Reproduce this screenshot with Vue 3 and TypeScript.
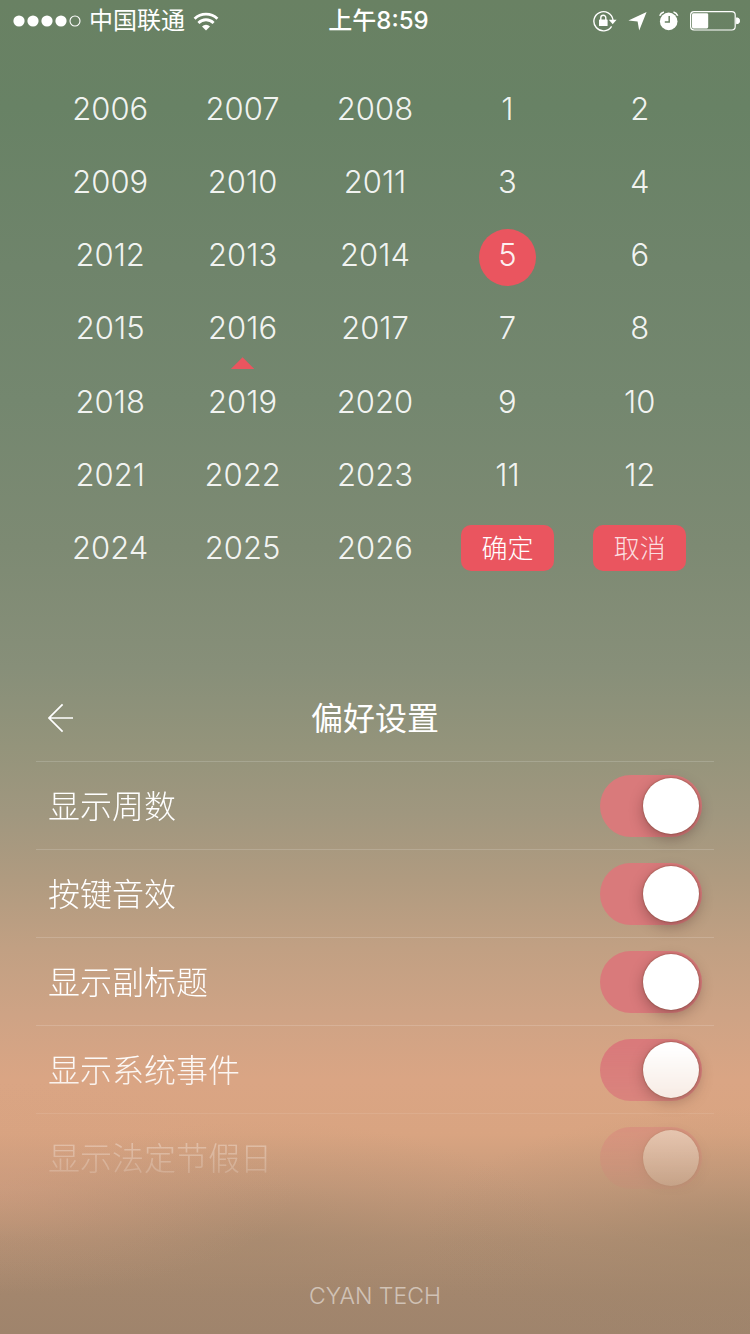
<script setup lang="ts">
import { ref } from 'vue'

interface YearRow {
  years: number[]
  months: number[]
}

interface Setting {
  id: string
  label: string
  on: boolean
}

const currentYear = ref(2016)
const currentMonth = ref(5)

const rows: YearRow[] = Array.from({ length: 7 }, (_, i) => ({
  years: [0, 1, 2].map((n) => 2006 + i * 3 + n),
  months: i < 6 ? [i * 2 + 1, i * 2 + 2] : [],
}))

const settings = ref<Setting[]>([
  { id: 'week', label: '显示周数', on: true },
  { id: 'sound', label: '按键音效', on: true },
  { id: 'subtitle', label: '显示副标题', on: true },
  { id: 'events', label: '显示系统事件', on: true },
  { id: 'holidays', label: '显示法定节假日', on: true },
])
</script>

<template>
  <div class="screen">
    <header class="status">
      <div class="status-left">
        <svg class="signal" width="68" height="12" viewBox="0 0 68 12" aria-hidden="true">
          <circle v-for="n in 4" :key="n" :cx="n * 14 - 8" cy="6" r="5.6" fill="#fff" />
          <circle cx="62" cy="6" r="5" fill="none" stroke="#fff" stroke-width="1.1" />
        </svg>
        <span>中国联通</span>
        <svg class="wifi" width="26" height="19" viewBox="0 0 26 19" aria-hidden="true">
          <g fill="none" stroke="#fff" stroke-width="2.8">
            <path d="M1.6 6.8A16.4 16.4 0 0 1 24.4 6.8" />
            <path d="M5.4 10.9A10.8 10.8 0 0 1 20.6 10.9" />
          </g>
          <path d="M13 18.6L9 14.4A5.8 5.8 0 0 1 17 14.4Z" fill="#fff" />
        </svg>
      </div>
      <time class="clock">上午8:59</time>
      <div class="status-right">
        <svg width="24" height="22" viewBox="0 0 24 22" aria-hidden="true">
          <path d="M18.6 16.4A9.6 9.6 0 1 1 20 10" fill="none" stroke="#fff" stroke-width="1.4" />
          <path d="M15.8 9.8H23.6L19.7 14.2Z" fill="#fff" />
          <rect x="6" y="9.4" width="8.6" height="6.6" rx=".6" fill="#fff" />
          <path d="M7.8 10V7.8a2.5 2.5 0 0 1 5 0V10" fill="none" stroke="#fff" stroke-width="1.4" />
        </svg>
        <svg width="20" height="20" viewBox="0 0 20 20" aria-hidden="true">
          <path d="M18.6 1L.4 9.4L9.6 10.4L11.2 19.4Z" fill="#fff" />
        </svg>
        <svg width="20" height="20" viewBox="0 0 20 20" aria-hidden="true">
          <circle cx="9.7" cy="10.4" r="8.8" fill="#fff" />
          <path d="M.7 4.8A6 6 0 0 1 4.9 1M18.7 4.8A6 6 0 0 0 14.5 1" fill="none" stroke="#fff" stroke-width="1.5" />
          <path d="M10.2 5V11H5.8" fill="none" stroke="#6a8264" stroke-width="1.5" />
        </svg>
        <svg width="50" height="20" viewBox="0 0 50 20" aria-hidden="true">
          <rect x=".6" y=".6" width="44.6" height="18.4" rx="3.4" fill="none" stroke="#fff" stroke-width="1.2" />
          <rect x="2" y="2.2" width="16.2" height="15.2" rx="1.4" fill="#fff" />
          <path d="M46.6 6.8a3 3 0 0 1 0 6Z" fill="#fff" stroke="#fff" />
        </svg>
      </div>
    </header>

    <section class="picker" aria-label="年月">
      <template v-for="(row, i) in rows" :key="i">
        <button
          v-for="y in row.years"
          :key="y"
          type="button"
          class="cell"
          :class="{ year: y === currentYear }"
          :aria-pressed="y === currentYear"
          @click="currentYear = y"
        >{{ y }}</button>
        <button
          v-for="m in row.months"
          :key="m"
          type="button"
          class="cell"
          :class="{ month: m === currentMonth }"
          :aria-pressed="m === currentMonth"
          @click="currentMonth = m"
        >{{ m }}</button>
      </template>
      <button type="button" class="action">确定</button>
      <button type="button" class="action cancel">取消</button>
    </section>

    <main class="panel">
      <div class="title-row">
        <button type="button" class="back" aria-label="返回">
          <svg width="28" height="30" viewBox="0 0 28 30" aria-hidden="true">
            <path d="M14.6 1.4L1 15L14.6 28.6M1 15H25" fill="none" stroke="#fff" stroke-width="1.7" />
          </svg>
        </button>
        <h1>偏好设置</h1>
      </div>
      <ul class="list">
        <li v-for="s in settings" :key="s.id">
          <label :for="s.id">{{ s.label }}</label>
          <input :id="s.id" v-model="s.on" type="checkbox" role="switch" class="toggle" />
        </li>
      </ul>
    </main>

    <footer>CYAN TECH</footer>
  </div>
</template>

<style>
body {
  margin: 0;
}
</style>

<style scoped>
.screen {
  min-height: 100vh;
  box-sizing: border-box;
  display: flex;
  flex-direction: column;
  overflow: hidden;
  color: #fff;
  font-family: Inter, "Noto Sans CJK SC", sans-serif;
  font-weight: 300;
  background:
    radial-gradient(ellipse 40% 8% at 0% 89%, rgba(212, 158, 130, 0.4), rgba(212, 158, 130, 0.15) 50%, transparent),
    radial-gradient(ellipse 44% 10% at 100% 93%, rgba(158, 134, 106, 0.5), rgba(158, 134, 106, 0.2) 50%, transparent),
    radial-gradient(ellipse 40% 9% at 35% 93%, rgba(160, 134, 108, 0.4), rgba(160, 134, 108, 0.15) 50%, transparent),
    linear-gradient(
      180deg,
      #698163 0%,
      #688265 8%,
      #6f846b 20%,
      #74876f 30%,
      #7d8a73 41%,
      #878f79 50%,
      #94947b 56%,
      #a0977f 61%,
      #b09b80 66%,
      #c1a083 71%,
      #cea385 76%,
      #daa584 81%,
      #d9a481 85%,
      #c69a7b 89%,
      #b08e72 93%,
      #a3866d 97%,
      #9f846c 100%
    );
}

button {
  padding: 0;
  border: 0;
  background: none;
  color: inherit;
  font: inherit;
  cursor: pointer;
}

.status {
  height: 42px;
  padding: 0 10px 0 13px;
  display: grid;
  grid-template-columns: 1fr auto 1fr;
  align-items: center;
  font-size: 24px;
  line-height: 42px;
  font-weight: 400;
}

.status-left,
.status-right {
  display: flex;
  align-items: center;
}

.status-left {
  gap: 8px;
}

.status-right {
  justify-content: flex-end;
  gap: 11px;
}

.clock {
  padding-left: 4px;
  font-weight: 500;
}

.picker {
  height: 513px;
  margin: 30px 44px 0;
  display: grid;
  grid-template-columns: repeat(5, 1fr);
  grid-template-rows: repeat(7, 1fr);
  font-size: 31px;
  line-height: 40px;
}

.cell {
  position: relative;
  z-index: 0;
  color: rgba(255, 255, 255, 0.92);
}

.year::after {
  content: "";
  position: absolute;
  left: calc(50% - 12px);
  bottom: -4px;
  width: 24px;
  height: 12px;
  background: #ea555f;
  clip-path: polygon(50% 0, 100% 100%, 0 100%);
}

.month::before {
  content: "";
  position: absolute;
  z-index: -1;
  left: calc(50% - 28px);
  top: calc(50% - 26px);
  width: 57px;
  height: 57px;
  border-radius: 50%;
  background: #ea555f;
}

.action {
  place-self: center;
  width: 93px;
  height: 46px;
  padding-top: 2px;
  border-radius: 10px;
  background: #ea555f;
  font-size: 26px;
}

.cancel {
  color: rgba(255, 255, 255, 0.82);
}

.panel {
  margin: 89px 36px 0;
}

.title-row {
  height: 88px;
  box-sizing: border-box;
  padding: 0 12px;
  display: grid;
  grid-template-columns: 1fr auto 1fr;
  align-items: center;
  border-bottom: 1px solid rgba(255, 255, 255, 0.16);
}

.back {
  justify-self: start;
  display: flex;
}

h1 {
  margin: 0;
  padding-top: 2px;
  font-size: 32px;
  line-height: 40px;
  font-weight: 400;
}

.list {
  margin: 0;
  padding: 0;
  list-style: none;
  -webkit-mask-image: linear-gradient(#000 285px, rgba(0, 0, 0, 0.78) 336px, rgba(0, 0, 0, 0.4) 362px, rgba(0, 0, 0, 0.12) 424px, transparent 436px);
  mask-image: linear-gradient(#000 285px, rgba(0, 0, 0, 0.78) 336px, rgba(0, 0, 0, 0.4) 362px, rgba(0, 0, 0, 0.12) 424px, transparent 436px);
}

.list li {
  height: 88px;
  box-sizing: border-box;
  padding: 0 12px;
  display: flex;
  align-items: center;
  justify-content: space-between;
  border-bottom: 1px solid rgba(255, 255, 255, 0.16);
  font-size: 32px;
  line-height: 40px;
}

.list label {
  padding-top: 2px;
}

.toggle {
  appearance: none;
  box-sizing: border-box;
  width: 102px;
  height: 62px;
  margin: 0;
  padding: 3px;
  display: flex;
  border-radius: 31px;
  background: rgba(255, 255, 255, 0.3);
  cursor: pointer;
}

.toggle:checked {
  justify-content: flex-end;
  background: #d97a7b;
}

.toggle::before {
  content: "";
  width: 56px;
  height: 56px;
  border-radius: 50%;
  background: #fff;
  box-shadow: 0 0 2px rgba(80, 40, 10, 0.6), 0 5px 14px rgba(60, 30, 30, 0.35);
}

footer {
  margin-top: auto;
  padding-bottom: 24px;
  text-align: center;
  font-size: 23px;
  line-height: 28px;
  color: rgba(255, 255, 255, 0.5);
}
</style>
